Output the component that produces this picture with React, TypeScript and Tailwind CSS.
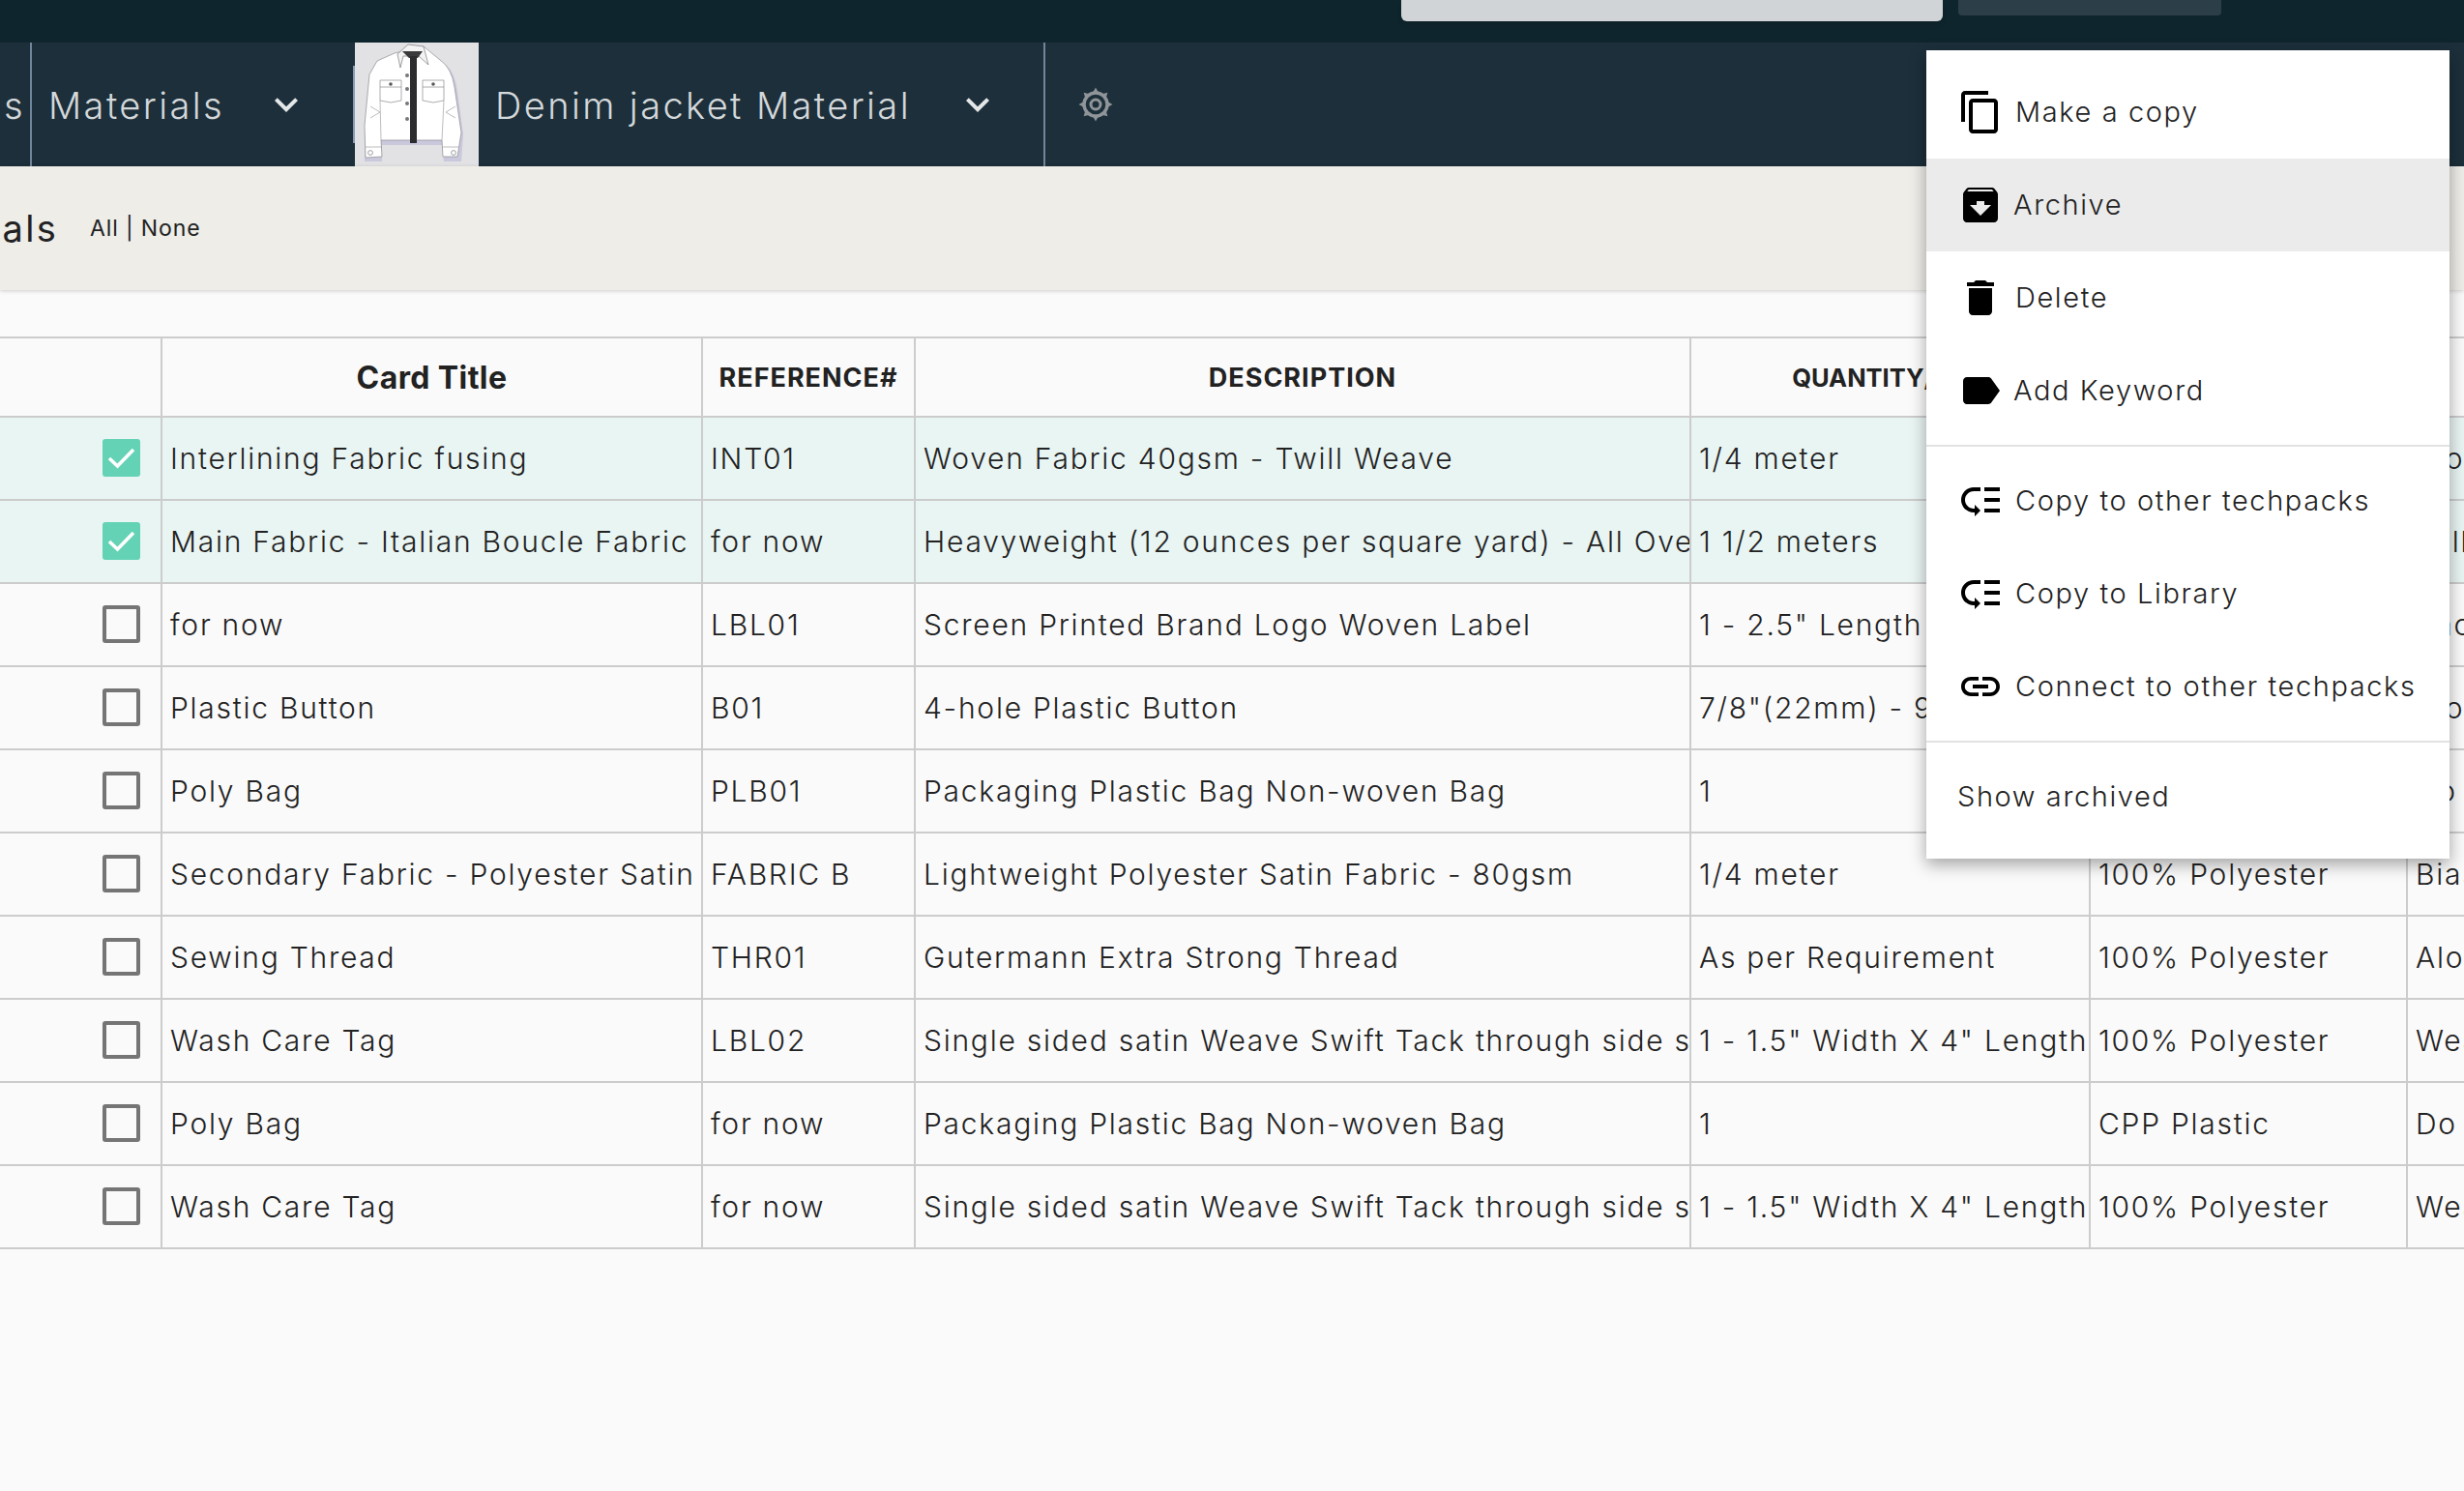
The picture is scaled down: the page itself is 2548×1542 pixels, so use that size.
import type { ReactNode } from 'react';

interface Row {
  title: string;
  ref: string;
  desc: string;
  qty: string;
  material: string;
  place: string;
  checked?: boolean;
}

const rows: Row[] = [
  { title: 'Interlining Fabric fusing', ref: 'INT01', desc: 'Woven Fabric 40gsm - Twill Weave', qty: '1/4 meter', material: '100% Polyester', place: 'Along', checked: true },
  { title: 'Main Fabric - Italian Boucle Fabric', ref: 'for now', desc: 'Heavyweight (12 ounces per square yard) - All Over Print', qty: '1 1/2 meters', material: 'Boucle', place: 'Full Body', checked: true },
  { title: 'for now', ref: 'LBL01', desc: 'Screen Printed Brand Logo Woven Label', qty: '1 - 2.5" Length', material: 'Woven', place: 'Back' },
  { title: 'Plastic Button', ref: 'B01', desc: '4-hole Plastic Button', qty: '7/8"(22mm) - 9 pcs', material: 'Plastic', place: 'Along' },
  { title: 'Poly Bag', ref: 'PLB01', desc: 'Packaging Plastic Bag Non-woven Bag', qty: '1', material: 'CPP Plastic', place: 'Do not' },
  { title: 'Secondary Fabric - Polyester Satin', ref: 'FABRIC B', desc: 'Lightweight Polyester Satin Fabric - 80gsm', qty: '1/4 meter', material: '100% Polyester', place: 'Bias Cut' },
  { title: 'Sewing Thread', ref: 'THR01', desc: 'Gutermann Extra Strong Thread', qty: 'As per Requirement', material: '100% Polyester', place: 'Along' },
  { title: 'Wash Care Tag', ref: 'LBL02', desc: 'Single sided satin Weave Swift Tack through side seam', qty: '1 - 1.5" Width X 4" Length', material: '100% Polyester', place: 'Wearer' },
  { title: 'Poly Bag', ref: 'for now', desc: 'Packaging Plastic Bag Non-woven Bag', qty: '1', material: 'CPP Plastic', place: 'Do not' },
  { title: 'Wash Care Tag', ref: 'for now', desc: 'Single sided satin Weave Swift Tack through side seam', qty: '1 - 1.5" Width X 4" Length', material: '100% Polyester', place: 'Wearer' },
];

const gridCols = 'grid grid-cols-[168px_559px_220px_802px_413px_328px_58px]';

function MaterialIcon({ d }: { d: string }) {
  return (
    <svg viewBox="0 0 24 24" className="w-[48px] h-[48px] shrink-0 fill-black">
      <path d={d} />
    </svg>
  );
}

function Chevron() {
  return (
    <svg viewBox="0 0 24 24" className="w-[48px] h-[48px] shrink-0 fill-[#e4e7e8]">
      <path d="M7.41 8.59L12 13.17l4.59-4.58L18 10l-6 6-6-6 1.41-1.41z" />
    </svg>
  );
}

function Gear() {
  const teeth = [0, 45, 90, 135, 180, 225, 270, 315];
  return (
    <svg viewBox="0 0 36 36" className="w-[36px] h-[36px] ml-[34px]">
      {teeth.map((a) => (
        <path key={a} d="M15.5 5 L18 0.5 L20.5 5 Z" fill="#8f9598" transform={`rotate(${a} 18 18)`} />
      ))}
      <circle cx="18" cy="18" r="12" fill="none" stroke="#8f9598" strokeWidth="3.4" />
      <circle cx="18" cy="18" r="5" fill="none" stroke="#8f9598" strokeWidth="3" />
    </svg>
  );
}

function Jacket() {
  return (
    <svg viewBox="0 0 128 128" className="w-[128px] h-[128px] shrink-0">
      <rect width="128" height="128" fill="#e2e2e4" />
      <path d="M24 21 L42 12 L72 6 L90 20 Q103 28 106 50 L112 95 L110 123 L92 123 L90 106 L28 106 L28 123 L10 123 L10 88 L15 38 Z" fill="#c9c8dc" />
      <path d="M23 19 L41 11 L71 4 L88 18 Q100 26 103 46 L110 93 L106 118 L91 118 L90 101 L27 101 L28 118 L11 119 L10 86 L15 33 Z" fill="#fff" stroke="#8a8b8f" strokeWidth="0.7" />
      <path d="M44 12 L55 2 L71 4 L76 23 L66 14 L50 14 L47 26 Z" fill="#f3f3f3" stroke="#77787c" strokeWidth="0.7" />
      <path d="M49 9 H70 L65 16 H56 Z" fill="#3a3a3c" />
      <rect x="57" y="14" width="7" height="90" fill="#2c2c2e" />
      <path d="M26 39 H48 V46 H26 Z M26 46 V60 L37 62 L48 60 V46" fill="#fff" stroke="#8a8b8f" strokeWidth="0.7" />
      <path d="M70 39 H92 V46 H70 Z M70 46 V60 L81 62 L92 60 V46" fill="#fff" stroke="#8a8b8f" strokeWidth="0.7" />
      <circle cx="37" cy="43" r="1.8" fill="#55565a" />
      <circle cx="81" cy="43" r="1.8" fill="#55565a" />
      {[34, 48, 63, 79].map((y) => (
        <circle key={y} cx="54" cy={y} r="2" fill="#77787c" />
      ))}
      <path d="M26 60 L27 101 M92 60 L90 101 M16 66 L26 72 L16 78 M104 66 L94 72 L104 78 M11 108 H28 M91 108 H107" fill="none" stroke="#a0a1a5" strokeWidth="0.7" />
      <circle cx="16" cy="114" r="2.4" fill="none" stroke="#77787c" strokeWidth="0.7" />
      <circle cx="102" cy="114" r="2.4" fill="none" stroke="#77787c" strokeWidth="0.7" />
    </svg>
  );
}

function Checkbox({ checked }: { checked?: boolean }) {
  if (checked) {
    return (
      <div className="w-[39px] h-[39px] rounded-[3px] bg-[#63d2b5] flex items-center justify-center">
        <svg viewBox="0 0 39 39" className="w-[39px] h-[39px]">
          <path d="M7 20 L15.5 28 L32 11" fill="none" stroke="#fff" strokeWidth="3.6" />
        </svg>
      </div>
    );
  }
  return <div className="w-[39px] h-[39px] rounded-[3px] border-[4px] border-[#757575]" />;
}

function Cell({ children, last }: { children: ReactNode; last?: boolean }) {
  return (
    <div className={`flex items-center overflow-hidden whitespace-nowrap pl-[8px] ${last ? '' : 'border-r-2 border-[#cccccc]'}`}>
      {children}
    </div>
  );
}

function HeadCell({ children, size = 'text-[27px] tracking-[1px]', last }: { children?: ReactNode; size?: string; last?: boolean }) {
  return (
    <div className={`flex items-center justify-center overflow-hidden whitespace-nowrap pt-[2px] font-bold text-[#222222] ${size} ${last ? '' : 'border-r-2 border-[#cccccc]'}`}>
      {children}
    </div>
  );
}

function MenuItem({ icon, label, active, gap }: { icon: string; label: string; active?: boolean; gap: string }) {
  return (
    <div className={`h-[96px] flex items-center pl-[32px] ${active ? 'bg-[#ebebeb]' : ''}`}>
      <MaterialIcon d={icon} />
      <span className={`${gap} text-[29px] tracking-[1.6px] text-[#222222]`}>{label}</span>
    </div>
  );
}

const LOW_PRIORITY = 'M14 5h8v2h-8zm0 5.5h8v2h-8zm0 5.5h8v2h-8zM2 11.5C2 15.08 4.92 18 8.5 18H9v2l3-3-3-3v2h-.5C6.02 16 4 13.98 4 11.5S6.02 7 8.5 7H12V5H8.5C4.92 5 2 7.92 2 11.5z';

export default function App() {
  return (
    <div className="relative w-[2548px] h-[1542px] overflow-hidden bg-[#fafafa] font-['Inter',sans-serif] font-light text-[#222222]">
      <div className="h-[44px] bg-[#0f252d] flex items-start pl-[1449px] gap-[16px]">
        <div className="w-[560px] h-[22px] rounded-b-[6px] bg-[#d0d4d7] shadow-md" />
        <div className="w-[272px] h-[16px] rounded-b-[4px] bg-[#2c3f48]" />
      </div>

      <div className="h-[128px] bg-[#1c2f3a] flex text-[#d4d8da] text-[38px] tracking-[2.4px]">
        <div className="w-[33px] flex items-center justify-end overflow-hidden border-r-2 border-[#71869a]">
          <span className="whitespace-nowrap pr-[5px] pt-[2px]">Sections</span>
        </div>
        <div className="w-[332px] flex items-center pl-[17px] pr-[45px] justify-between">
          <span className="pt-[2px]">Materials</span>
          <Chevron />
        </div>
        <div className="w-[2px] h-[80px] mt-[24px] bg-[#8b9bb3]" />
        <Jacket />
        <div className="w-[586px] flex items-center pl-[17px] pr-[44px] justify-between border-r-2 border-[#71869a]">
          <span className="pt-[2px]">Denim jacket Material</span>
          <Chevron />
        </div>
        <div className="flex items-center">
          <Gear />
        </div>
      </div>

      <div className="h-[128px] bg-[#eeede8] flex items-center shadow-[0_1px_4px_rgba(0,0,0,0.18)] relative">
        <div className="w-[60px] overflow-hidden flex justify-end">
          <span className="text-[38px] tracking-[2.3px] whitespace-nowrap font-normal">Materials</span>
        </div>
        <span className="ml-[33px] text-[23px] tracking-[0.87px] font-normal">All | None</span>
      </div>

      <div className="mt-[48px] text-[30px] tracking-[1.75px]">
        <div className={`${gridCols} h-[84px] border-y-2 border-[#cccccc] box-border`}>
          <HeadCell />
          <HeadCell size="text-[32px] tracking-[0.4px]">Card Title</HeadCell>
          <HeadCell>REFERENCE#</HeadCell>
          <HeadCell>DESCRIPTION</HeadCell>
          <HeadCell size="text-[25.5px] tracking-[0px]">QUANTITY/SIZE</HeadCell>
          <HeadCell>MATERIAL</HeadCell>
          <HeadCell last />
        </div>
        {rows.map((row, index) => (
          <div key={index} className={`${gridCols} h-[86px] border-b-2 border-[#cccccc] ${row.checked ? 'bg-[#e9f5f3]' : ''}`}>
            <div className="flex items-center justify-end pr-[21px] pb-[2px] border-r-2 border-[#cccccc]">
              <Checkbox checked={row.checked} />
            </div>
            <Cell>{row.title}</Cell>
            <Cell>{row.ref}</Cell>
            <Cell>{row.desc}</Cell>
            <Cell>{row.qty}</Cell>
            <Cell>{row.material}</Cell>
            <Cell last>{row.place}</Cell>
          </div>
        ))}
      </div>

      <div className="absolute left-[1992px] top-[52px] w-[541px] h-[836px] bg-white shadow-[0_6px_16px_rgba(0,0,0,0.35)] pt-[16px]">
        <MenuItem gap="ml-[12px]" label="Make a copy" icon="M16 1H4c-1.1 0-2 .9-2 2v14h2V3h12V1zm3 4H8c-1.1 0-2 .9-2 2v14c0 1.1.9 2 2 2h11c1.1 0 2-.9 2-2V7c0-1.1-.9-2-2-2zm0 16H8V7h11v14z" />
        <MenuItem gap="ml-[10px]" active label="Archive" icon="M20.54 5.23l-1.39-1.68C18.88 3.21 18.47 3 18 3H6c-.47 0-.88.21-1.16.55L3.46 5.23C3.17 5.57 3 6.02 3 6.5V19c0 1.1.9 2 2 2h14c1.1 0 2-.9 2-2V6.5c0-.48-.17-.93-.46-1.27zM12 17.5L6.5 12H10v-2h4v2h3.5L12 17.5zM5.12 5l.81-1h12l.94 1H5.12z" />
        <MenuItem gap="ml-[12px]" label="Delete" icon="M6 19c0 1.1.9 2 2 2h8c1.1 0 2-.9 2-2V7H6v12zM19 4h-3.5l-1-1h-5l-1 1H5v2h14V4z" />
        <MenuItem gap="ml-[10px]" label="Add Keyword" icon="M17.63 5.84C17.27 5.33 16.67 5 16 5L5 5.01C3.9 5.01 3 5.9 3 7v10c0 1.1.9 1.99 2 1.99L16 19c.67 0 1.27-.33 1.63-.84L22 12l-4.37-6.16z" />
        <div className="h-[2px] bg-[#e2e2e2] mt-[8px] mb-[8px]" />
        <MenuItem gap="ml-[12px]" label="Copy to other techpacks" icon={LOW_PRIORITY} />
        <MenuItem gap="ml-[12px]" label="Copy to Library" icon={LOW_PRIORITY} />
        <MenuItem gap="ml-[12px]" label="Connect to other techpacks" icon="M3.9 12c0-1.71 1.39-3.1 3.1-3.1h4V7H7c-2.76 0-5 2.24-5 5s2.24 5 5 5h4v-1.9H7c-1.71 0-3.1-1.39-3.1-3.1zM8 13h8v-2H8v2zm9-6h-4v1.9h4c1.71 0 3.1 1.39 3.1 3.1s-1.39 3.1-3.1 3.1h-4V17h4c2.76 0 5-2.24 5-5s-2.24-5-5-5z" />
        <div className="h-[2px] bg-[#e2e2e2] mt-[8px] mb-[8px]" />
        <div className="h-[96px] flex items-center pl-[32px] text-[29px] tracking-[1.6px] text-[#222222]">Show archived</div>
      </div>
    </div>
  );
}
